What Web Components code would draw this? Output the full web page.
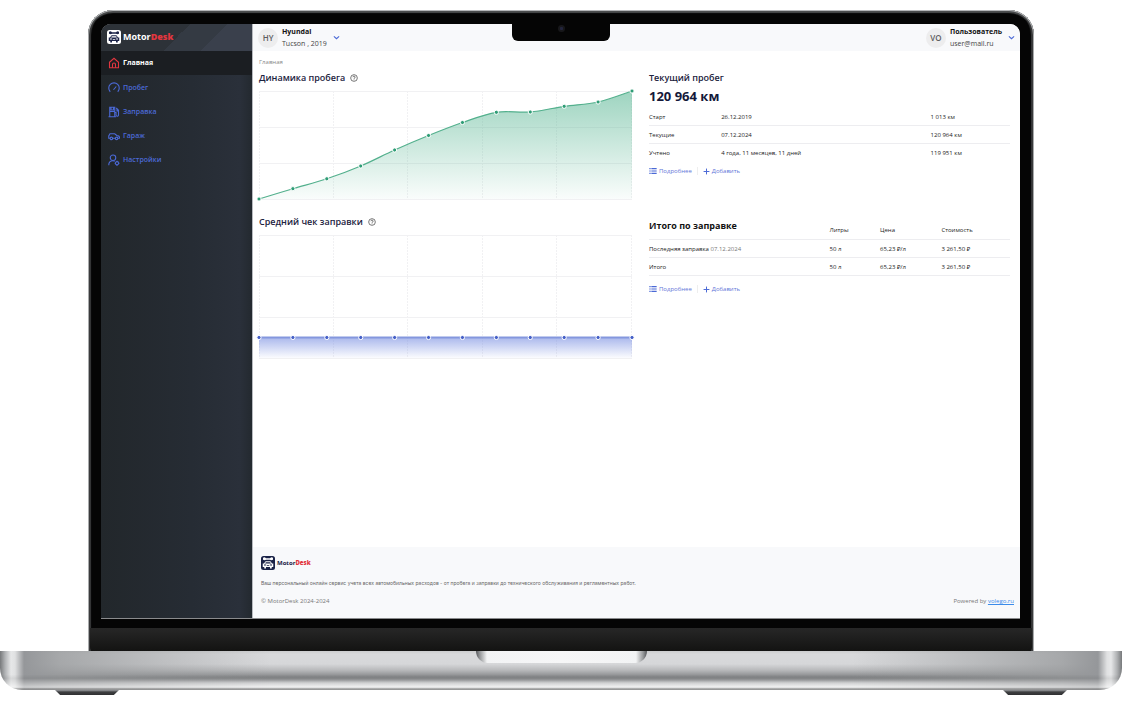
<!DOCTYPE html>
<html lang="ru">
<head>
<meta charset="utf-8">
<title>MotorDesk</title>
<style>
  body { margin: 0; background: #fff; font-family: "Open Sans", "Noto Sans", sans-serif; font-size: 6px; line-height: 12px; color: #222; }
</style>
</head>
<body>
<laptop-frame>
  <app-sidebar slot="side"></app-sidebar>
  <app-header></app-header>
  <app-dashboard></app-dashboard>
  <app-footer></app-footer>
</laptop-frame>

<script>
const define = (tag, html, setup) => {
  const tpl = document.createElement('template');
  tpl.innerHTML = '<style>:host,*{box-sizing:border-box}</style>' + html;
  customElements.define(tag, class extends HTMLElement {
    connectedCallback() {
      if (this.shadowRoot) return;
      this.attachShadow({ mode: 'open' }).append(tpl.content.cloneNode(true));
      if (setup) setup(this, this.shadowRoot);
    }
  });
};

/* Stroke icons on a 24-unit grid */
const ICONS = {
  home: '<path d="M3 10.5 12 2.5l9 8V21.5H3z"/><path d="M9 21.5V15a3 3 0 0 1 6 0v6.5"/>',
  gauge: '<path d="M4.500 19.500A10.500 10.500 0 1 1 19.500 19.500"/><path d="M11 15.500 16.500 9"/>',
  fuel: '<path d="M3.500 21.500V2.500h10v19M1 21.500h15M3.500 11h10M6 3v5h5V3"/><path d="M13.500 13h2.500v5a2.500 2.500 0 0 0 5 0V8.500L16.500 4M18 6v4h3"/>',
  car: '<path d="M4 16.500H1.500V12L4 7.500h9.500L17.500 11l4 1.200 1.500 1.800v2.500h-3M9.500 16.500h5"/><circle cx="6.800" cy="16.800" r="2.500"/><circle cx="17.200" cy="16.800" r="2.500"/>',
  user: '<circle cx="10" cy="7.500" r="5.500"/><path d="M1.500 22.500c0-6 3.500-9 8.500-9 1.500 0 2.500.3 3.500.8"/><circle cx="18" cy="18.500" r="3.200"/><path d="M18 13.500v1.800M18 21.700v1.800M13.300 18.500h1.500M21.200 18.500h1.800"/>',
  help: '<circle cx="12" cy="12" r="10"/><path d="M8.500 9.500a3.500 3 0 1 1 4.500 3c-.7.300-1 .8-1 2M12 16.500v2"/>',
  list: '<path d="M1 5h4M7 5h16M1 12h4M7 12h16M1 19h4M7 19h16"/>',
  plus: '<path d="M12 2v20M2 12h20"/>',
  chevron: '<path d="m3 8 9 8 9-8"/>'
};
define('ui-icon', `<style>
  :host { display: block; flex: none; width: var(--icon, 10px); height: var(--icon, 10px); }
  svg { display: block; width: 100%; height: 100%; fill: none; stroke: currentColor; stroke-width: var(--stroke, 2.2); }
</style><svg viewBox="0 0 24 24" aria-hidden="true"></svg>`,
  (el, root) => { root.querySelector('svg').innerHTML = ICONS[el.getAttribute('name')]; });

define('brand-logo', `<style>
  :host { display: flex; align-items: center; gap: 2px; font-weight: 700; color: var(--brand); }
  svg { width: 14px; height: 14px; flex: none; display: block; }
  .tile { fill: var(--tile); } .mark { fill: none; stroke: var(--mark); stroke-width: 2; stroke-linejoin: round; }
  .solid { fill: var(--mark); }
  b { color: var(--accent); }
</style>
<svg viewBox="0 0 28 28" aria-hidden="true">
  <rect class="tile" width="28" height="28" rx="5"/>
  <path class="solid" d="M4 3.500 7.500 2.500l2.500 2h8l2.500-2L24 3.500v4l-3.500 1L18 7.500h-8L7.500 8.500 4 7.500z"/>
  <path class="mark" d="m7 16 2-4.500h10L21 16"/>
  <path class="solid" d="M3.500 15h21v7h-3v3h-3.500v-3h-8v3H6.500v-3h-3z"/>
  <path d="M6 17h4.500l-1 2H6zM22 17h-4.500l1 2H22zM11.500 18.500h5v1.500h-5z" fill="var(--tile)"/>
</svg><span>Motor<b>Desk</b></span>`);

define('laptop-frame', `<style>
  :host { display: flex; flex-direction: column; min-height: 100vh; padding: 10px 6px 9px 0; }
  .lid { position: relative; flex: 1; display: flex; flex-direction: column; margin: 0 88px; background: #050505;
    border-radius: 25px 25px 0 0; padding: 14px 14px 0 13px;
    box-shadow: inset 0 1px 0 #b4b6b8, inset 1px 0 0 #a9abac, inset -1px 0 0 #a9abac, inset 0 3px 1px #4c4e4f, inset 3px 0 1px #3a3b3c, inset -3px 0 1px #3a3b3c; }
  .screen { flex: 1; display: flex; background: #fff; border-radius: 10px 10px 0 0; overflow: hidden; border-bottom: 1px solid #8a8b8d; }
  .page { flex: 1; min-width: 0; display: flex; flex-direction: column; border-left: 1px solid #b7babf; }
  .notch { position: absolute; top: 12px; left: calc(50% - 49px); width: 98px; height: 19px; padding-top: 3px; border-radius: 0 0 6px 6px; background: #050505; }
  .notch::before { content: ""; display: block; width: 7px; height: 7px; margin: 0 auto; border-radius: 50%; background: radial-gradient(#22243d 25%, #17171a 40%); }
  .chin { height: 23px; margin: 9px -12px 0 -11px; background: linear-gradient(#272727, #131312); border-radius: 0 0 4px 4px; }
  .base { height: 39px; border-radius: 0 0 22px 22px; overflow: hidden;
    background: linear-gradient(90deg, #77797b, #b0b2b4 5px, #e6e7e8 11px, #e0e1e2 15px, #95979a 24px, #9a9c9ecc 60px, #9a9c9e00 270px, #9a9c9e00 calc(100% - 270px), #9a9c9ecc calc(100% - 60px), #95979a calc(100% - 24px), #e0e1e2 calc(100% - 15px), #e6e7e8 calc(100% - 11px), #b0b2b4 calc(100% - 5px), #77797b),
      linear-gradient(#cbcccd, #d8d9db 3px, #d6d7d9 13px, #b9babc 19px, #858789 26px, #949698 29px, #c6c7c9 32px, #e0e1e2 36px, #b0b1b2 38px, #a5a6a7); }
  .shade { height: 39px; background: linear-gradient(transparent 60%, #0001 70%, #ffffff88 93%, #88888888 97%); }
  .grip { width: 171px; height: 12px; margin: 0 auto; border-radius: 0 0 12px 12px;
    background: linear-gradient(90deg, #55575a, #97999b 4px, #f2f3f4 11px, #f6f6f7 50%, #f2f3f4 calc(100% - 11px), #97999b calc(100% - 4px), #55575a); }
  .feet { display: flex; justify-content: space-between; padding: 0 55px; }
  .feet i { width: 64px; height: 5px; background: linear-gradient(#9b9da0, #3e3f41 2px, #2f3032); clip-path: polygon(0 0, 100% 0, 92% 100%, 8% 100%); }
  @media (max-width: 700px) { .lid { margin: 0 16px; } }
</style>
<div class="lid">
  <div class="screen"><slot name="side"></slot><div class="page"><slot></slot></div></div>
  <div class="chin"></div><div class="notch"></div>
</div>
<div class="base"><div class="shade"><div class="grip"></div></div></div>
<div class="feet"><i></i><i></i></div>`);

define('app-sidebar', `<style>
  :host { display: block; flex: none; width: 151px; background: linear-gradient(90deg, #22272b, #262c34 60%, #2a303a 92%, #23292f); font-size: 7px; font-weight: 600; }
  .top { height: 27px; display: flex; align-items: center; padding: 0 6px 2px; font-size: 9px;
    background: linear-gradient(135deg, #2d3238 50%, #343a43 50%, #343a43 71%, #3a404c 71%); }
  brand-logo { --brand: #fff; --accent: #e2363f; --tile: #fff; --mark: #1b2348; }
  ul { list-style: none; margin: 0; padding: 0; }
  a { display: flex; align-items: center; gap: 3px; height: 24px; padding: 0 7px; color: #4b69d6; text-decoration: none; --icon: 12px; --stroke: 2.2; }
  a.on { background: #1b1e22; color: #fff; font-weight: 700; margin-bottom: 1px; }
  a.on ui-icon { color: #e2363f; }
</style>
<div class="top"><brand-logo></brand-logo></div>
<nav><ul>
  <li><a class="on" href="#home" aria-current="page"><ui-icon name="home"></ui-icon>Главная</a></li>
  <li><a href="#mileage"><ui-icon name="gauge"></ui-icon>Пробег</a></li>
  <li><a href="#fuel"><ui-icon name="fuel"></ui-icon>Заправка</a></li>
  <li><a href="#garage"><ui-icon name="car"></ui-icon>Гараж</a></li>
  <li><a href="#settings"><ui-icon name="user"></ui-icon>Настройки</a></li>
</ul></nav>`);

define('profile-menu', `<style>
  :host { display: block; }
  button { display: flex; align-items: center; gap: 4px; padding: 0; border: 0; background: none; font: 7px "Open Sans", "Noto Sans", sans-serif; color: #444; text-align: left; }
  .avatar { width: 20px; height: 20px; border-radius: 50%; background: #ededee; font-weight: 600; font-size: 8px; line-height: 20px; text-align: center; color: #5c5c60; }
  .text { display: grid; line-height: 12px; padding-right: 2px; }
  ::slotted([slot=name]) { font-weight: 700; color: #111; }
  ui-icon { --icon: 7px; --stroke: 4; color: #4b69d6; }
</style>
<button type="button" aria-haspopup="menu"><span class="avatar"><slot name="initials"></slot></span>
<span class="text"><slot name="name"></slot><slot></slot></span><ui-icon name="chevron"></ui-icon></button>`);

define('app-header', `<style>
  :host { display: flex; justify-content: space-between; align-items: center; height: 27px; padding: 0 5px; background: #f8f9fb; }
</style>
<profile-menu><span slot="initials">HY</span><span slot="name">Hyundai</span><span>Tucson , 2019</span></profile-menu>
<profile-menu><span slot="initials">VO</span><span slot="name">Пользователь</span><span>user@mail.ru</span></profile-menu>`);

define('area-chart', `<style>
  :host { display: block; }
  svg { display: block; width: 100%; height: auto; overflow: visible; }
  .grid { fill: none; stroke: #f1f1f3; } .dash { stroke-dasharray: 2 1; }
  .line { fill: none; stroke: var(--line); stroke-width: var(--weight, 1.2); }
  circle { fill: var(--dot); stroke: #fff; stroke-width: 1; }
</style><svg role="img"></svg>`, (el, root) => {
  const w = 373, h = +el.getAttribute('height');
  const ys = el.getAttribute('values').split(' ').map(Number);
  const pts = ys.map((y, i) => [i * w / (ys.length - 1), y]);
  let d = 'M' + pts[0];
  for (let i = 0; i < pts.length - 1; i++) {
    const a = pts[Math.max(i - 1, 0)], b = pts[i], c = pts[i + 1], e = pts[Math.min(i + 2, pts.length - 1)];
    d += `C${b[0] + (c[0] - a[0]) / 6},${b[1] + (c[1] - a[1]) / 6} ${c[0] - (e[0] - b[0]) / 6},${c[1] - (e[1] - b[1]) / 6} ${c}`;
  }
  let rows = '', cols = '';
  for (let i = 0; i < 4; i++) rows += `M0 ${Math.round(i * h / 3) + .5}H${w}`;
  for (let i = 0; i < 6; i++) cols += `M${Math.floor(i * (w - 1) / 5) + .5} 0V${h}`;
  const svg = root.querySelector('svg');
  svg.setAttribute('viewBox', `0 0 ${w} ${h}`);
  svg.setAttribute('aria-label', el.getAttribute('label'));
  svg.innerHTML = `<defs><linearGradient id="g" x1="0" x2="0" y1="0" y2="1"><stop stop-color="var(--fill)" stop-opacity="var(--top)"/><stop offset="1" stop-color="var(--fill)" stop-opacity=".03"/></linearGradient></defs>
    <path class="grid" d="${rows}"/><path class="grid dash" d="${cols}"/>
    <path d="${d}V${h}H0Z" fill="url(#g)"/><path class="line" d="${d}"/>` +
    pts.map(p => `<circle cx="${p[0]}" cy="${p[1]}" r="2.1"/>`).join('');
});

define('section-title', `<style>
  :host { display: flex; align-items: center; gap: 5px; height: 16px; margin-bottom: 5px; color: #1c2340; }
  h2 { margin: 0; font-size: 9px; font-weight: 600; line-height: 16px; }
  button { padding: 0; border: 0; background: none; color: #555; --icon: 8px; --stroke: 2.4; }
</style><h2><slot></slot></h2><button type="button" aria-label="Справка"><ui-icon name="help"></ui-icon></button>`);

define('card-actions', `<style>
  :host { display: flex; align-items: center; height: 12px; --icon: 8px; --stroke: 3.4; }
  a { display: flex; align-items: center; gap: 2px; color: #5f76d8; text-decoration: none; }
  a ui-icon { color: #4b69d6; }
  a + a { margin-left: 5px; padding-left: 5px; border-left: 1px solid #eee; line-height: 8px; --icon: 7px; }
</style><a href="#details"><ui-icon name="list"></ui-icon>Подробнее</a><a href="#add"><ui-icon name="plus"></ui-icon>Добавить</a>`);

const TABLE = `
  :host { display: block; }
  h2 { margin: 0; font-size: 9px; font-weight: 600; line-height: 16px; color: #1c2340; }
  table { width: 100%; table-layout: fixed; border-collapse: separate; border-spacing: 0; color: #222; }
  th, td { height: 18px; padding: 0; text-align: left; font-weight: 400; border-bottom: 1px solid #ededf0; white-space: nowrap; }
`;
define('mileage-card', `<style>${TABLE}
  p { margin: 1px 0 2px; font-size: 13px; font-weight: 700; line-height: 19px; color: #14193a; }
  tr:last-child > * { border-bottom: 0; }
  card-actions { margin-top: 3px; }
</style>
<h2>Текущий пробег</h2><p>120 964 км</p>
<table><colgroup><col style="width:20%"><col style="width:58%"><col style="width:22%"></colgroup>
<tr><th scope="row">Старт</th><td>26.12.2019</td><td>1 013 км</td></tr>
<tr><th scope="row">Текущие</th><td>07.12.2024</td><td>120 964 км</td></tr>
<tr><th scope="row">Учтено</th><td>4 года, 11 месяцев, 11 дней</td><td>119 951 км</td></tr></table>
<card-actions></card-actions>`);

define('fuel-card', `<style>${TABLE}
  :host { padding-top: 4px; }
  thead th { height: 22px; vertical-align: bottom; padding-bottom: 3px; }
  thead th:first-child { padding-bottom: 5px; }
  h2 { color: #111; font-weight: 700; }
  span { color: #777; }
  card-actions { margin-top: 7px; }
</style>
<table><colgroup><col style="width:50%"><col style="width:14%"><col style="width:17%"><col style="width:19%"></colgroup>
<thead><tr><th scope="col"><h2>Итого по заправке</h2></th><th scope="col">Литры</th><th scope="col">Цена</th><th scope="col">Стоимость</th></tr></thead>
<tbody><tr><th scope="row">Последняя заправка <span>07.12.2024</span></th><td>50 л</td><td>65,23 ₽/л</td><td>3 261,50 ₽</td></tr>
<tr><th scope="row">Итого</th><td>50 л</td><td>65,23 ₽/л</td><td>3 261,50 ₽</td></tr></tbody></table>
<card-actions></card-actions>`);

define('app-dashboard', `<style>
  :host { display: block; flex: 1; padding: 5px 10px 16px 6px; }
  nav { height: 12px; margin-bottom: 2px; color: #888; }
  .grid { display: grid; grid-template-columns: 373fr 361fr; column-gap: 17px; row-gap: 15px; }
  .green { --line: #53b08d; --dot: #2f9d76; --fill: #4eb18c; --top: .55; }
  .blue { --line: #8497de; --dot: #4560c8; --fill: #7d92e2; --top: .65; --weight: 2; }
</style>
<nav aria-label="Навигация">Главная</nav>
<div class="grid">
  <section><section-title>Динамика пробега</section-title><area-chart class="green" label="Динамика пробега" height="108" values="108 97.700 87.800 75 59 44.500 31.500 21.300 21 15.300 11 0"></area-chart></section>
  <mileage-card></mileage-card>
  <section><section-title>Средний чек заправки</section-title><area-chart class="blue" label="Средний чек заправки" height="123" values="102.500 102.500 102.500 102.500 102.500 102.500 102.500 102.500 102.500 102.500 102.500 102.500"></area-chart></section>
  <fuel-card></fuel-card>
</div>`);

define('app-footer', `<style>
  :host { display: block; padding: 8px 6px 11px 8px; background: #f8f9fb; color: #777; }
  brand-logo { --brand: #1b2348; --accent: #e2363f; --tile: #1b2348; --mark: #fff; height: 15px; }
  p { margin: 7px 0 6px; font: 5px/12px Inter, "Noto Sans", sans-serif; color: #666; }
  div { display: flex; justify-content: space-between; }
  a { color: #3b8bea; }
</style>
<brand-logo></brand-logo>
<p>Ваш персональный онлайн сервис учета всех автомобильных расходов - от пробега и заправки до технического обслуживания и регламентных работ.</p>
<div><span>© MotorDesk 2024-2024</span><span>Powered by <a href="#volego">volego.ru</a></span></div>`);
</script>
</body>
</html>
